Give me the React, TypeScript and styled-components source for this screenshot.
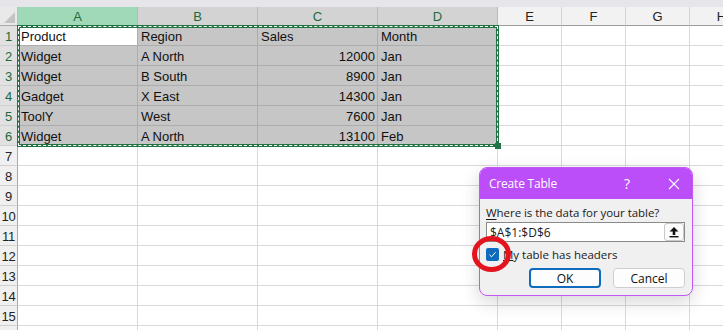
import React from "react";
import styled, { createGlobalStyle } from "styled-components";

const Global = createGlobalStyle`
  html, body { margin: 0; padding: 0; background: #ffffff; overflow: hidden; }
  body { width: 723px; height: 330px; }
`;

const GREEN = "#217346";

const Page = styled.div`
  position: relative;
  width: 723px;
  height: 330px;
  overflow: hidden;
  font-family: "Liberation Sans", Arial, sans-serif;
`;

const TopBand = styled.div`
  height: 7px;
  background: #e6e6ea;
`;

const Sheet = styled.div`
  display: grid;
  grid-template-columns: 18px repeat(4, 120px) repeat(4, 64px);
  grid-template-rows: 19px;
  grid-auto-rows: 20px;
  width: 754px;
`;

const Corner = styled.div`
  box-sizing: border-box;
  background: #e9e9e9;
  border-right: 1px solid #bdbdbd;
  border-bottom: 1px solid #a9a9a9;
  position: relative;
  &::after {
    content: "";
    position: absolute;
    right: 2px;
    bottom: 2px;
    width: 0;
    height: 0;
    border-left: 11px solid transparent;
    border-bottom: 11px solid #c4c4c4;
  }
`;

const ColHead = styled.div<{ $state: "active" | "sel" | "none" }>`
  box-sizing: border-box;
  display: flex;
  align-items: center;
  justify-content: center;
  font-size: 13px;
  padding-top: 1px;
  background: ${(p) => (p.$state === "active" ? "#a0d9b8" : p.$state === "sel" ? "#d3d3d3" : "#f2f2f2")};
  color: ${(p) => (p.$state === "none" ? "#222" : "#1d6a40")};
  border-right: 1px solid ${(p) => (p.$state === "none" ? "#d4d4d4" : "#b8b8b8")};
  border-bottom: 1px solid ${(p) => (p.$state === "none" ? "#9c9c9c" : "#8f8f8f")};
`;

const RowHead = styled.div<{ $sel: boolean }>`
  box-sizing: border-box;
  display: flex;
  align-items: center;
  justify-content: center;
  font-size: 13px;
  padding-top: 1px;
  background: ${(p) => (p.$sel ? "#e1e1e1" : "#f0f0f0")};
  color: ${(p) => (p.$sel ? "#1d6a40" : "#222")};
  border-right: 1px solid #a9a9a9;
  border-bottom: 1px solid #d0d0d0;
  letter-spacing: -0.3px;
`;

const Cell = styled.div<{ $sel: boolean; $active?: boolean; $num?: boolean }>`
  box-sizing: border-box;
  display: flex;
  align-items: center;
  justify-content: ${(p) => (p.$num ? "flex-end" : "flex-start")};
  padding: 2px ${(p) => (p.$num ? "2px" : "0")} 0 ${(p) => (p.$num ? "0" : "3px")};
  font-size: 13px;
  color: #111;
  white-space: nowrap;
  overflow: hidden;
  background: ${(p) => (p.$active ? "#ffffff" : p.$sel ? "#c6c6c6" : "#ffffff")};
  border-right: 1px solid ${(p) => (p.$sel ? "#adadad" : "#dadada")};
  border-bottom: 1px solid ${(p) => (p.$sel ? "#adadad" : "#dadada")};
`;

const Marquee = styled.div`
  position: absolute;
  left: 17px;
  top: 25px;
  width: 482px;
  height: 122px;
  box-sizing: border-box;
  border: 3px solid ${GREEN};
  pointer-events: none;
  &::before {
    content: "";
    position: absolute;
    inset: -2px;
    border: 1px dashed #ffffff;
  }
  &::after {
    content: "";
    position: absolute;
    right: -5px;
    bottom: -5px;
    width: 6px;
    height: 6px;
    background: ${GREEN};
  }
`;

const Dialog = styled.div`
  position: absolute;
  left: 479px;
  top: 167px;
  width: 214px;
  height: 129px;
  box-sizing: border-box;
  border: 1px solid #c356f5;
  border-radius: 8px;
  background: #f0f0f0;
  overflow: hidden;
  box-shadow: 0 6px 18px rgba(0, 0, 0, 0.16);
  display: flex;
  flex-direction: column;
  font-family: "Open Sans", "Noto Sans", sans-serif;
`;

const TitleBar = styled.div`
  height: 31px;
  flex: none;
  background: #bb4ef8;
  color: #ffffff;
  display: flex;
  align-items: center;
  padding: 0 12px 0 9px;
  font-size: 12px;
`;

const Title = styled.span`
  flex: 1;
  letter-spacing: -0.2px;
`;

const HelpMark = styled.span`
  font-size: 14px;
  margin-right: 38px;
`;

const Body = styled.div`
  display: flex;
  flex-direction: column;
  padding: 5px 7px 0 6px;
  font-size: 11.5px;
  color: #1a1a1a;
`;

const Label = styled.div`
  height: 16px;
  display: flex;
  align-items: center;
  letter-spacing: -0.05px;
  u { text-decoration-thickness: 1px; text-underline-offset: 2px; }
`;

const InputBox = styled.div`
  margin-top: 2px;
  height: 20px;
  box-sizing: border-box;
  border: 1px solid #8a8a8a;
  background: #ffffff;
  display: flex;
  align-items: center;
  justify-content: space-between;
  padding-left: 3px;
  font-size: 12px;
`;

const PickButton = styled.div`
  width: 20px;
  height: 18px;
  box-sizing: border-box;
  border: 1px solid #c8c8c8;
  border-radius: 3px;
  background: #fbfbfb;
  display: flex;
  align-items: center;
  justify-content: center;
`;

const CheckRow = styled.div`
  margin-top: 6px;
  height: 13px;
  display: flex;
  align-items: center;
  gap: 4px;
`;

const Check = styled.div`
  width: 13px;
  height: 13px;
  border-radius: 2px;
  background: #0f6cbd;
  display: flex;
  align-items: center;
  justify-content: center;
`;

const Buttons = styled.div`
  margin-top: 7px;
  display: flex;
  justify-content: flex-end;
  gap: 12px;
`;

const Btn = styled.div<{ $primary?: boolean }>`
  width: 72px;
  height: 20px;
  box-sizing: border-box;
  border-radius: 4px;
  background: #fdfdfd;
  border: ${(p) => (p.$primary ? "2px solid #0f6cbd" : "1px solid #cfcfcf")};
  display: flex;
  align-items: center;
  justify-content: center;
  font-size: 12px;
  color: #111;
`;

const RedRing = styled.div`
  position: absolute;
  left: 472px;
  top: 236px;
  width: 39px;
  height: 36px;
  box-sizing: border-box;
  border: 5px solid #e4141f;
  border-radius: 50%;
  pointer-events: none;
`;

type ColDef = { label: string; state: "active" | "sel" | "none" };
const cols: ColDef[] = [
  { label: "A", state: "active" },
  { label: "B", state: "sel" },
  { label: "C", state: "sel" },
  { label: "D", state: "sel" },
  { label: "E", state: "none" },
  { label: "F", state: "none" },
  { label: "G", state: "none" },
  { label: "H", state: "none" },
];

const data: (string | number)[][] = [
  ["Product", "Region", "Sales", "Month"],
  ["Widget", "A North", 12000, "Jan"],
  ["Widget", "B South", 8900, "Jan"],
  ["Gadget", "X East", 14300, "Jan"],
  ["ToolY", "West", 7600, "Jan"],
  ["Widget", "A North", 13100, "Feb"],
];

export default function App() {
  const rows = Array.from({ length: 16 }, (_, i) => i + 1);
  return (
    <Page>
      <Global />
      <TopBand />
      <Sheet>
        <Corner />
        {cols.map((c) => (
          <ColHead key={c.label} $state={c.state}>
            {c.label}
          </ColHead>
        ))}
        {rows.map((r) => {
          const inSel = r <= 6;
          return (
            <React.Fragment key={r}>
              <RowHead $sel={inSel}>{r}</RowHead>
              {cols.map((c, ci) => {
                const sel = inSel && ci < 4;
                const v = inSel && ci < 4 ? data[r - 1][ci] : "";
                return (
                  <Cell
                    key={c.label}
                    $sel={sel}
                    $active={r === 1 && ci === 0}
                    $num={typeof v === "number"}
                  >
                    {v}
                  </Cell>
                );
              })}
            </React.Fragment>
          );
        })}
      </Sheet>
      <Marquee />
      <Dialog>
        <TitleBar>
          <Title>Create Table</Title>
          <HelpMark>?</HelpMark>
          <svg width="12" height="12" viewBox="0 0 12 12">
            <path d="M1 1 L11 11 M11 1 L1 11" stroke="#fff" strokeWidth="1.1" />
          </svg>
        </TitleBar>
        <Body>
          <Label>
            <span>
              <u>W</u>here is the data for your table?
            </span>
          </Label>
          <InputBox>
            <span>$A$1:$D$6</span>
            <PickButton>
              <svg width="12" height="12" viewBox="0 0 12 12">
                <path d="M6 1 L10.5 5.5 L7.3 5.5 L7.3 9 L4.7 9 L4.7 5.5 L1.5 5.5 Z" fill="#111" />
                <rect x="1.5" y="10" width="9" height="1.4" fill="#111" />
              </svg>
            </PickButton>
          </InputBox>
          <CheckRow>
            <Check>
              <svg width="9" height="9" viewBox="0 0 9 9">
                <path d="M1.5 4.8 L3.6 6.8 L7.6 2.2" stroke="#fff" strokeWidth="1" fill="none" />
              </svg>
            </Check>
            <span>
              <u>M</u>y table has headers
            </span>
          </CheckRow>
          <Buttons>
            <Btn $primary>OK</Btn>
            <Btn>Cancel</Btn>
          </Buttons>
        </Body>
      </Dialog>
      <RedRing />
    </Page>
  );
}
